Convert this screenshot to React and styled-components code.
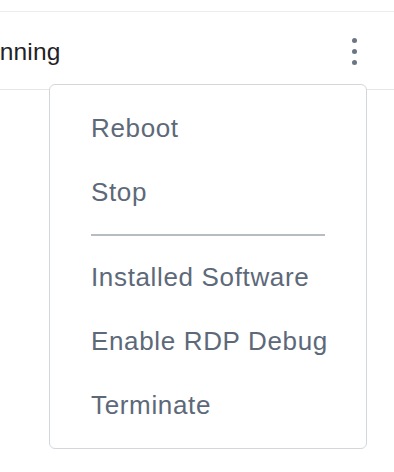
import React from 'react';
import styled, { createGlobalStyle } from 'styled-components';

const GlobalStyle = createGlobalStyle`
    html, body {
        margin: 0;
        padding: 0;
        background: #ffffff;
        overflow: hidden;
    }
    body {
        font-family: "Liberation Sans", Arial, sans-serif;
    }
`;

const Page = styled.div`
    width: 394px;
    height: 472px;
    padding-top: 11px;
    box-sizing: border-box;
    overflow: hidden;
`;

const Row = styled.div`
    position: relative;
    height: 79px;
    display: flex;
    align-items: center;
    justify-content: space-between;
    border-top: 1px solid #ececec;
    border-bottom: 1px solid #e6e6e6;
    box-sizing: border-box;
`;

const Status = styled.span`
    margin-left: -32px;
    margin-top: 2px;
    font-size: 24.5px;
    letter-spacing: 0.2px;
    color: #1f2226;
`;

const Actions = styled.div`
    position: relative;
    width: 40px;
    height: 100%;
    margin-right: 20px;
    display: flex;
    align-items: center;
    justify-content: center;
`;

const KebabButton = styled.button`
    border: 0;
    background: transparent;
    padding: 0;
    display: flex;
    flex-direction: column;
    align-items: center;
    gap: 6px;
    cursor: pointer;
    margin-top: 2px;
`;

const Dot = styled.span`
    width: 5px;
    height: 5px;
    border-radius: 50%;
    background: #6b7584;
`;

const Menu = styled.ul`
    position: absolute;
    top: 72px;
    right: 7px;
    width: 318px;
    margin: 0;
    padding: 11px 41px;
    list-style: none;
    background: #ffffff;
    border: 1px solid #d3d7dc;
    border-radius: 6px;
    box-sizing: border-box;
    z-index: 10;
`;

const MenuItem = styled.li`
    height: 64px;
    line-height: 64px;
    font-size: 26px;
    letter-spacing: 0.65px;
    color: #5d6979;
    white-space: nowrap;
    cursor: pointer;
`;

const Divider = styled.li`
    height: 2px;
    margin: 10px 0 9px;
    background: #b7bcc3;
`;

const items = ['Installed Software', 'Enable RDP Debug', 'Terminate'];

function App() {
    return (
        <Page>
            <GlobalStyle />
            <Row>
                <Status>Running</Status>
                <Actions>
                    <KebabButton aria-label="More actions">
                        <Dot />
                        <Dot />
                        <Dot />
                    </KebabButton>
                    <Menu>
                        <MenuItem>Reboot</MenuItem>
                        <MenuItem>Stop</MenuItem>
                        <Divider />
                        {items.map((label) => (
                            <MenuItem key={label}>{label}</MenuItem>
                        ))}
                    </Menu>
                </Actions>
            </Row>
        </Page>
    );
}

export default App;
